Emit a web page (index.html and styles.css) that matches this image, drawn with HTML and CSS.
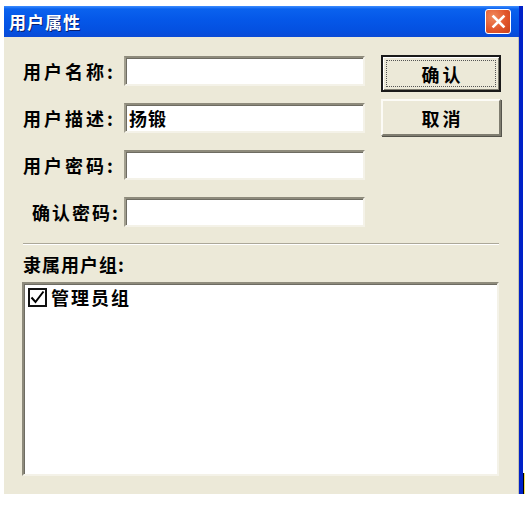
FILE: index.html
```html
<!DOCTYPE html>
<html lang="zh">
<head>
<meta charset="utf-8">
<title>用户属性</title>
<link rel="stylesheet" href="styles.css">
</head>
<body>
<div class="window">
  <div class="titlebar">
    <span class="title">用户属性</span>
    <span class="close">
      <svg width="15" height="15" viewBox="0 0 15 15"><path d="M2.5 2.5 L12.5 12.5 M12.5 2.5 L2.5 12.5" stroke="#fff" stroke-width="2.6" stroke-linecap="square"/></svg>
    </span>
  </div>
  <div class="client">
    <div class="top">
      <div class="fields">
        <label class="lbl">用户名称:</label><div class="edit"></div>
        <label class="lbl">用户描述:</label><div class="edit"><span class="val">扬锻</span></div>
        <label class="lbl">用户密码:</label><div class="edit"></div>
        <label class="lbl indent">确认密码:</label><div class="edit"></div>
      </div>
      <div class="buttons">
        <div class="btn default"><span class="focus">确认</span></div>
        <div class="btn">取消</div>
      </div>
    </div>
    <div class="sep"></div>
    <div class="grp-lbl">隶属用户组:</div>
    <div class="listbox">
      <div class="item">
        <span class="chk"><svg width="15" height="15" viewBox="0 0 15 15"><path d="M1.5 7.5 L5.5 12 L13.5 1.5" fill="none" stroke="#000" stroke-width="2"/></svg></span>
        <span class="item-text">管理员组</span>
      </div>
    </div>
  </div>
  <span class="caret"></span>
</div>
</body>
</html>
```
FILE: styles.css
```css
* { box-sizing: border-box; }
html, body { margin: 0; padding: 0; background: #fff; }
body {
  font-family: "Noto Sans CJK SC", "Liberation Sans", sans-serif;
  color: #000;
}
.window {
  position: relative;
  margin: 6px 0 0 4px;
  width: 519px;
}
.titlebar {
  height: 31px;
  display: flex;
  align-items: center;
  justify-content: space-between;
  padding: 0 8px 0 5px;
  background: linear-gradient(#3d8dff 0, #0a62ee 3px, #0557e8 45%, #0450e0 80%, #0a4ad6 100%);
  border-right: 4px solid #0021c8;
}
.title {
  color: #fff;
  font-weight: 700;
  font-size: 17px;
  letter-spacing: 1px;
  text-shadow: 1px 1px 0 #0a1f6e;
  line-height: 1;
}
.close {
  width: 26px;
  height: 25px;
  border: 1px solid #fff;
  border-radius: 3px;
  background: radial-gradient(circle at 30% 30%, #f08a5e 0, #e2562c 55%, #c9411c 100%);
  display: flex;
  align-items: center;
  justify-content: center;
}
.client {
  height: 457px;
  background: #ece9d8;
  border-right: 4px solid #0021c8;
  box-shadow: inset -1px 0 0 #c5c2b2;
  padding: 19px 16px 0 19px;
}
.top {
  display: flex;
  align-items: flex-start;
}
.fields {
  display: grid;
  grid-template-columns: 91px 241px;
  column-gap: 10px;
  row-gap: 17px;
  align-items: center;
}
.lbl {
  font-size: 18px;
  font-weight: 700;
  letter-spacing: 3px;
  white-space: nowrap;
  line-height: 30px;
}
.lbl.indent {
  padding-left: 9px;
  letter-spacing: 2px;
}
.edit {
  height: 30px;
  background: #fff;
  border-top: 2px solid #8e8b7c;
  border-left: 2px solid #a19e8e;
  border-right: 2px solid #f4f2e8;
  border-bottom: 2px solid #f4f2e8;
  box-shadow: inset 1px 1px 0 #6e6c62;
  padding: 0 3px;
  display: flex;
  align-items: center;
}
.val {
  font-size: 18px;
  font-weight: 700;
  letter-spacing: 1px;
}
.buttons {
  margin-left: 16px;
  margin-top: -1px;
  display: flex;
  flex-direction: column;
  gap: 7px;
}
.btn {
  width: 120px;
  height: 37px;
  background: #ece9d8;
  border-top: 2px solid #fcfbf6;
  border-left: 2px solid #fcfbf6;
  border-right: 2px solid #7f7d70;
  border-bottom: 2px solid #7f7d70;
  box-shadow: 1px 1px 0 #55544c;
  display: flex;
  align-items: center;
  justify-content: center;
  font-size: 18px;
  font-weight: 700;
  letter-spacing: 3px;
  padding-left: 3px;
}
.btn.default {
  border: 2px solid #1a1a1a;
  box-shadow: inset 1px 1px 0 #fff, inset -1px -1px 0 #7f7d70;
  padding: 3px;
}
.focus {
  flex: 1;
  align-self: stretch;
  border: 1px dotted #555;
  display: flex;
  align-items: center;
  justify-content: center;
  padding-left: 3px;
}
.sep {
  margin-top: 16px;
  width: 476px;
  height: 2px;
  border-top: 1px solid #aca899;
  border-bottom: 1px solid #fff;
}
.grp-lbl {
  margin-top: 9px;
  font-size: 18px;
  font-weight: 700;
  letter-spacing: 1px;
  line-height: 20px;
}
.listbox {
  margin-top: 8px;
  margin-left: -1px;
  width: 477px;
  height: 194px;
  background: #fff;
  border-top: 2px solid #8e8b7c;
  border-left: 2px solid #8e8b7c;
  border-right: 2px solid #f4f2e8;
  border-bottom: 2px solid #f4f2e8;
  box-shadow: inset 1px 1px 0 #6e6c62;
  padding: 4px 4px;
}
.item {
  display: flex;
  align-items: center;
  gap: 4px;
  height: 19px;
}
.chk {
  width: 19px;
  height: 19px;
  border: 2px solid #111;
  display: flex;
  align-items: center;
  justify-content: center;
}
.item-text {
  font-size: 18px;
  font-weight: 700;
  letter-spacing: 2px;
  line-height: 19px;
}
.caret {
  position: absolute;
  right: -2px;
  bottom: 0;
  width: 2px;
  height: 21px;
  border-left: 1px solid #000;
  background: #f3e25a;
}
```
